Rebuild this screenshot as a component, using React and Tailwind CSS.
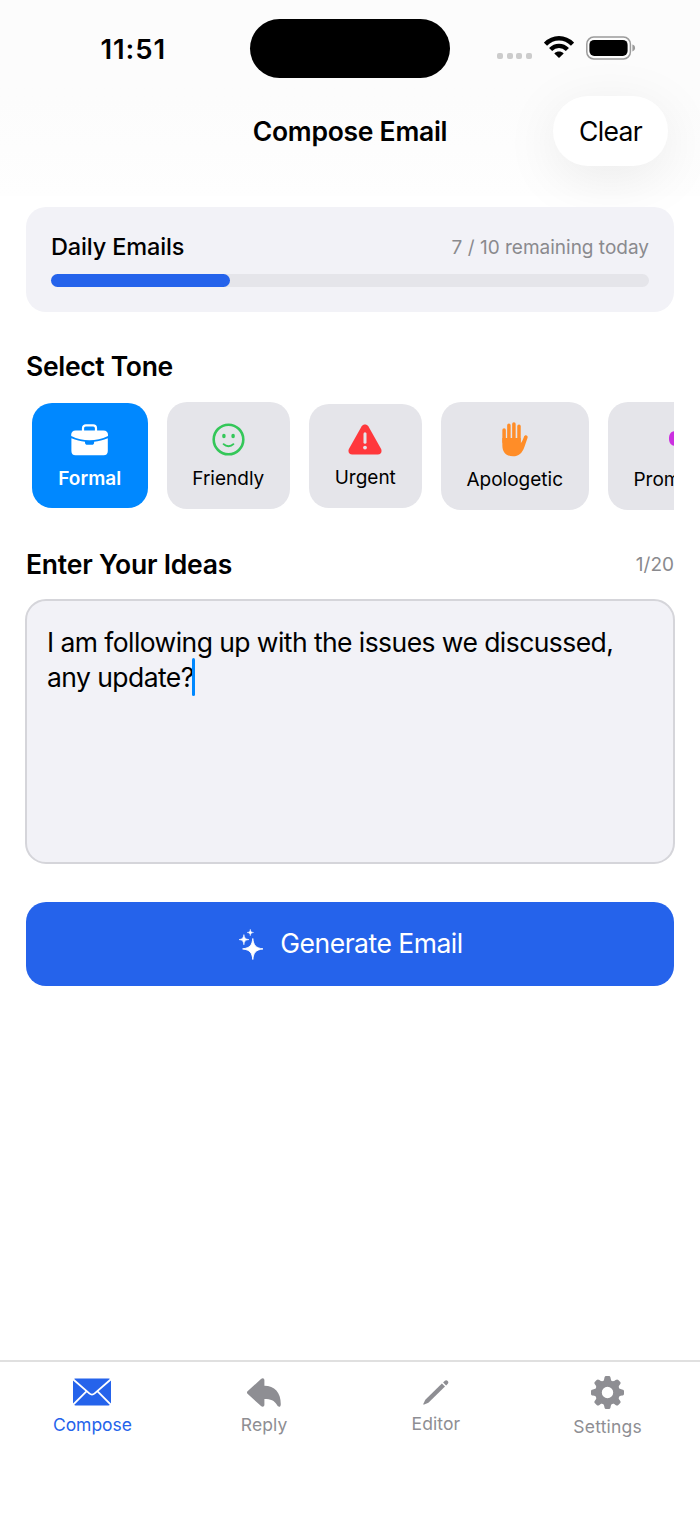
import { useState } from 'react';

const DAILY_LIMIT = 10;
const REMAINING = 7;

function WifiIcon() {
  return (
    <svg className="h-[22px] w-[30px]" viewBox="0 0 30 22" fill="none" stroke="black">
      <path d="M1.5 8.2C9.2 0.3 20.8 0.3 28.5 8.2" strokeWidth="4.4" />
      <path d="M6.6 13.5C11.4 8.7 18.6 8.7 23.4 13.5" strokeWidth="4.4" />
      <path d="M15 22L10.3 17.4C12.9 14.9 17.1 14.9 19.7 17.4Z" fill="black" stroke="none" />
    </svg>
  );
}

function BatteryIcon() {
  return (
    <svg className="h-6 w-[50px]" viewBox="0 0 50 24" fill="none">
      <rect x="0.8" y="1.1" width="43.6" height="21.8" rx="7" stroke="#9b9b9b" strokeWidth="1.5" />
      <rect x="3.4" y="3.9" width="38.2" height="16" rx="4.8" fill="black" />
      <path d="M46.4 8.6C50 9.6 50 14.4 46.4 15.4Z" fill="#9b9b9b" />
    </svg>
  );
}

function BriefcaseIcon() {
  return (
    <svg className="h-8 w-[38px]" viewBox="0 0 38 32">
      <path d="M12 7V4.2C12 2.4 13.2 1.4 14.8 1.4H22.2C23.9 1.4 25 2.4 25 4.2V7" fill="none" stroke="white" strokeWidth="2.2" />
      <path d="M4.6 6.4H32.4C35.4 6.4 37 8 37 10.8V12C31 15 24.7 16.2 18.5 16.2S6 15 0.2 12V10.8C0.2 8 1.8 6.4 4.6 6.4Z" fill="white" />
      <path d="M0.4 14.2C5 16.2 9.6 17.3 14 17.7V18.4C14 20 15 20.8 16.3 20.8H20.8C22.3 20.8 23.1 20 23.1 18.4V17.7C27.6 17.3 32.4 16.2 36.8 14.2V27C36.8 29.8 35.4 31.2 32.6 31.2H4.6C1.8 31.2 0.4 29.8 0.4 27Z" fill="white" />
    </svg>
  );
}

function SmileIcon() {
  return (
    <svg className="h-[33px] w-[33px]" viewBox="0 0 33 33" fill="none" stroke="#34c759">
      <circle cx="16.5" cy="16.5" r="14.8" strokeWidth="2.6" />
      <ellipse cx="11.9" cy="13" rx="1.8" ry="2.2" fill="#34c759" stroke="none" />
      <ellipse cx="21.1" cy="13" rx="1.8" ry="2.2" fill="#34c759" stroke="none" />
      <path d="M11.6 21.2C14.4 24 18.6 24 21.4 21.2" strokeWidth="1.9" strokeLinecap="round" />
    </svg>
  );
}

function WarningIcon() {
  return (
    <svg className="h-[31px] w-[34px]" viewBox="0 0 34 31">
      <path d="M13.7 2.3C15.2 -0.1 18.8 -0.1 20.3 2.3L33 24.8C34.4 27.5 32.9 30.5 29.8 30.5H4.2C1.1 30.5 -0.4 27.5 1 24.8Z" fill="#ff383c" />
      <path d="M17 9.8V18.2" stroke="#e5e5ea" strokeWidth="3" strokeLinecap="round" />
      <circle cx="17" cy="23.6" r="1.9" fill="#e5e5ea" />
    </svg>
  );
}

function HandIcon() {
  return (
    <svg className="h-[35px] w-[26px]" viewBox="0 0 26 35" fill="#ff8d28" stroke="#ff8d28" strokeLinecap="round">
      <path d="M2.1 8V20M6.9 3.2V18M11.9 1.9V18M17 4.2V20" strokeWidth="3.5" fill="none" />
      <path d="M0.35 16H18.75V21.3C20 19.8 21 17.2 21.9 14.9C22.5 13.6 23.5 13.1 24.5 13.5C25.6 13.9 25.9 14.8 25.5 16.1L22.4 25C20.2 31.3 16.6 34.3 11.1 34.3C4.3 34.3 0.35 30.2 0.35 23.4Z" stroke="none" />
    </svg>
  );
}

function MegaphoneIcon() {
  return (
    <svg className="h-[34px] w-[36px]" viewBox="0 0 36 34" fill="#cb30e0">
      <path d="M6 8.3H13V22.7H6C2.2 22.7 0 20.1 0 15.5S2.2 8.3 6 8.3Z" />
      <path d="M15 8L32 1V30L15 23Z" />
    </svg>
  );
}

function SparklesIcon() {
  return (
    <svg className="h-[31px] w-6" viewBox="0 0 24 31" fill="white">
      <path d="M13.8 9.5C14.7 16.5 16.5 18.8 24 19.9C16.5 21 14.7 23.3 13.8 30.5C12.9 23.3 11.1 21 3.6 19.9C11.1 18.8 12.9 16.5 13.8 9.5Z" stroke="white" strokeWidth="0.9" />
      <path d="M4.9 5.6C5.5 9.2 6.3 10.1 9.9 10.6C6.3 11.1 5.5 12 4.9 15.8C4.3 12 3.5 11.1 -0.1 10.6C3.5 10.1 4.3 9.2 4.9 5.6Z" stroke="white" strokeWidth="0.6" />
      <path d="M11.3 0.2C11.7 2.6 12.2 3.1 14.6 3.5C12.2 3.9 11.7 4.4 11.3 6.8C10.9 4.4 10.4 3.9 8 3.5C10.4 3.1 10.9 2.6 11.3 0.2Z" stroke="white" strokeWidth="0.4" />
    </svg>
  );
}

function MailIcon() {
  return (
    <svg className="h-7 w-[38px]" viewBox="0 0 38 28">
      <rect x="0" y="0.5" width="38" height="27" rx="2.4" fill="currentColor" />
      <path d="M-0.5 0.8L16.3 15.4C18 16.9 20 16.9 21.7 15.4L38.5 0.8M-0.5 27.3L13.4 13.3M38.5 27.3L24.6 13.3" fill="none" stroke="white" strokeWidth="1.8" />
    </svg>
  );
}

function ReplyIcon() {
  return (
    <svg className="h-[29px] w-[34px]" viewBox="0 0 34 29" fill="currentColor">
      <path d="M0.8 13.1L14 1C15.6 -0.4 17.4 0.2 17.4 2.2V7.8C27.5 7.8 33.8 14.5 33.8 26.2C33.8 29.2 31.4 29.5 30.2 27.3C27.2 22.2 23.8 21 17.4 21V26.8C17.4 28.8 15.4 29.4 14 28L0.8 16C-0.4 15 -0.4 14.1 0.8 13.1Z" />
    </svg>
  );
}

function PencilIcon() {
  return (
    <svg className="h-[25px] w-[26px]" viewBox="0 0 26 25" fill="currentColor">
      <path d="M18.9 3.6L22 6.6L5.4 22.8L1.2 24.6C0.5 24.9 0.1 24.5 0.4 23.8L2.3 19.8Z" />
      <path d="M20.1 2.5L21.6 1C22.6 0 23.8 0 24.7 0.9C25.6 1.8 25.6 3 24.6 4L23.1 5.4Z" />
    </svg>
  );
}

function GearIcon() {
  return (
    <svg className="h-[33px] w-[33px]" viewBox="-16.5 -16.5 33 33" fill="currentColor">
      <circle r="9" fill="none" stroke="currentColor" strokeWidth="6.6" />
      {[0, 45, 90, 135, 180, 225, 270, 315].map(angle => (
        <path key={angle} transform={`rotate(${angle})`} d="M-5.2 -10.5C-3.8 -11.5 -3.4 -12.5 -3.1 -14.5C-2.9 -16 -2.3 -16.5 -1.2 -16.5H1.2C2.3 -16.5 2.9 -16 3.1 -14.5C3.4 -12.5 3.8 -11.5 5.2 -10.5Z" />
      ))}
    </svg>
  );
}

const tones = [
  { name: 'Formal', icon: BriefcaseIcon, size: 'h-[105px] w-[115.5px]' },
  { name: 'Friendly', icon: SmileIcon, size: 'h-[107px] w-[122.5px]' },
  { name: 'Urgent', icon: WarningIcon, size: 'h-[104px] w-[112.5px]' },
  { name: 'Apologetic', icon: HandIcon, size: 'h-[108px] w-[147.5px]' },
  { name: 'Promotional', icon: MegaphoneIcon, size: 'h-[108px] w-[158px]' },
];

const tabs = [
  { name: 'Compose', icon: MailIcon, label: 'mt-[6.5px] tracking-[-0.05px]' },
  { name: 'Reply', icon: ReplyIcon, label: 'mt-[6.5px] tracking-[0.1px]' },
  { name: 'Editor', icon: PencilIcon, label: 'mt-[5.5px] tracking-[0.1px]' },
  { name: 'Settings', icon: GearIcon, label: 'mt-[8.5px] tracking-[0.2px]' },
];

export default function App() {
  const [tone, setTone] = useState('Formal');
  const [tab, setTab] = useState('Compose');

  return (
    <div className="flex h-[1514px] w-[700px] flex-col overflow-hidden bg-white font-['Inter',sans-serif] text-black">
      <header className="h-[196px] shrink-0 bg-linear-to-b from-[#fcfcfc] from-50% to-[#fefefe]">
        <div className="grid h-24 grid-cols-[250px_200px_250px] pt-[19px]">
          <div className="pt-[14px] pl-[100.5px] text-[27.5px] leading-8 font-semibold tracking-[0.9px]">11:51</div>
          <div className="h-[59px] rounded-full bg-black" />
          <div className="flex pt-[17px] pl-[47px]">
            <div className="mt-[17px] flex h-[6px] gap-[3.6px]">
              {[0, 1, 2, 3].map(i => (
                <span key={i} className="h-[6px] w-[6px] rounded-[2px] bg-[#cccccc]" />
              ))}
            </div>
            <div className="ml-[12px]"><WifiIcon /></div>
            <div className="ml-[12px]"><BatteryIcon /></div>
          </div>
        </div>
        <div className="grid h-[70px] grid-cols-[175px_350px_175px] items-center">
          <h1 className="col-start-2 text-center text-[26.5px] leading-8 font-semibold tracking-[-0.28px]">Compose Email</h1>
          <button className="ml-[28px] h-[70px] w-[115px] rounded-full bg-white pt-px text-[26.5px] tracking-[-0.65px] shadow-[0_12px_56px_rgba(0,0,0,0.08)]">
            Clear
          </button>
        </div>
      </header>

      <main className="flex-1 px-[26px] pt-[11px]">
        <section className="h-[104.5px] rounded-[20px] bg-[#f2f2f7] px-[25px] pt-[25px]">
          <div className="flex h-[30px] items-center justify-between">
            <span className="text-[23.5px] font-medium tracking-[-0.15px]">Daily Emails</span>
            <span className="pt-[2px] text-[19px] text-[#8a8a8e]">{REMAINING} / {DAILY_LIMIT} remaining today</span>
          </div>
          <div className="mt-[12px] h-[12.5px] rounded-full bg-[#e5e5ea]">
            <div className="h-full rounded-full bg-[#2563eb]" style={{ width: `${(1 - REMAINING / DAILY_LIMIT) * 100}%` }} />
          </div>
        </section>

        <h2 className="mt-[38.5px] text-[26.5px] leading-8 font-semibold tracking-[-0.32px]">Select Tone</h2>
        <div className="mt-[18.5px] flex h-[110px] items-center gap-[19.5px] overflow-hidden pl-[6px]">
          {tones.map(({ name, icon: Icon, size }) => (
            <button
              key={name}
              onClick={() => setTone(name)}
              className={`flex shrink-0 flex-col items-center justify-center rounded-[20px] pt-[3px] ${size} ${tone === name ? 'bg-[#0088ff] font-semibold text-white' : 'bg-[#e5e5ea] text-black'}`}
            >
              <Icon />
              <span className="mt-[11px] text-[19px] leading-6">{name}</span>
            </button>
          ))}
        </div>

        <div className="mt-[37.5px] flex h-8 items-center justify-between">
          <h2 className="text-[26.5px] leading-8 font-semibold tracking-[-0.22px]">Enter Your Ideas</h2>
          <span className="pt-[2px] text-[19px] text-[#8a8a8e]">1/20</span>
        </div>
        <div className="-mx-px mt-[18.5px] h-[265px] rounded-[21px] border-2 border-[#d5d5da] bg-[#f2f2f7] px-[20px] pt-[24px] text-[26.5px] leading-[35px] tracking-[-0.57px]">
          <p>I am following up with the issues we discussed,</p>
          <p className="flex items-center">
            any update?
            <span className="-my-1 -ml-[2px] h-[38px] w-[3px] rounded-full bg-[#0088ff]" />
          </p>
        </div>

        <button className="mt-[38px] flex h-[84px] w-full items-center justify-center gap-[17px] rounded-[20px] bg-[#2563eb] pt-px pl-[2px] text-[26.5px] tracking-[-0.5px] text-white">
          <SparklesIcon />
          Generate Email
        </button>
      </main>

      <nav className="grid h-[154px] shrink-0 grid-cols-4 border-t-2 border-[#e0e0e0] px-[6.5px] pt-[13.5px]">
        {tabs.map(({ name, icon: Icon, label }) => (
          <button
            key={name}
            onClick={() => setTab(name)}
            className={`flex flex-col items-center ${tab === name ? 'text-[#2563eb]' : 'text-[#8e8e93]'}`}
          >
            <span className="flex h-[33px] items-center"><Icon /></span>
            <span className={`text-[17.5px] leading-5 ${label}`}>{name}</span>
          </button>
        ))}
      </nav>
    </div>
  );
}
